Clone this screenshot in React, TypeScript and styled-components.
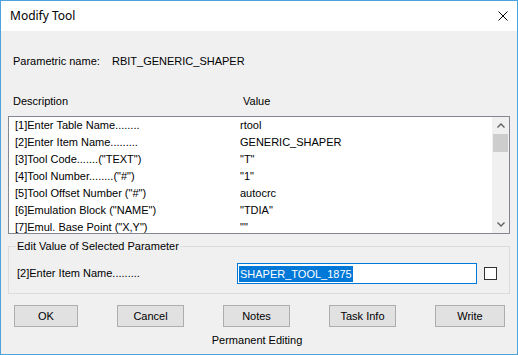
import React from "react";
import styled, { createGlobalStyle } from "styled-components";

const GlobalStyle = createGlobalStyle`
  html, body {
    margin: 0;
    padding: 0;
    background: #ffffff;
  }
`;

const parameters = [
  { name: "[1]Enter Table Name........", value: "rtool" },
  { name: "[2]Enter Item Name.........", value: "GENERIC_SHAPER" },
  { name: '[3]Tool Code.......("TEXT")', value: '"T"' },
  { name: '[4]Tool Number........("#")', value: '"1"' },
  { name: '[5]Tool Offset Number ("#")', value: "autocrc" },
  { name: '[6]Emulation Block ("NAME")', value: '"TDIA"' },
  { name: '[7]Emul. Base Point ("X,Y")', value: '""' },
];

const buttons = [
  { label: "OK", width: 64 },
  { label: "Cancel", width: 67 },
  { label: "Notes", width: 67 },
  { label: "Task Info", width: 67 },
  { label: "Write", width: 70 },
];

export default function App() {
  return (
    <>
      <GlobalStyle />
      <Window>
        <TitleBar>
          <Title>Modify Tool</Title>
          <CloseButton aria-label="Close">
            <svg width="10" height="10" viewBox="0 0 10 10">
              <path d="M0.5 0.5 L9.5 9.5 M9.5 0.5 L0.5 9.5" stroke="#000" strokeWidth="1" fill="none" />
            </svg>
          </CloseButton>
        </TitleBar>

        <Body>
          <ParamRow>
            <ParamLabel>Parametric name:</ParamLabel>
            <span>RBIT_GENERIC_SHAPER</span>
          </ParamRow>

          <ColumnHeader>
            <span>Description</span>
            <span>Value</span>
          </ColumnHeader>

          <ListBox>
            <Rows>
              {parameters.map((p) => (
                <Row key={p.name}>
                  <span>{p.name}</span>
                  <span>{p.value}</span>
                </Row>
              ))}
            </Rows>
            <ScrollBar>
              <ScrollArrow>
                <svg width="8" height="5" viewBox="0 0 8 5">
                  <path d="M0.5 4.5 L4 1 L7.5 4.5" stroke="#606060" strokeWidth="1.4" fill="none" />
                </svg>
              </ScrollArrow>
              <Thumb />
              <Track />
              <ScrollArrow>
                <svg width="8" height="5" viewBox="0 0 8 5">
                  <path d="M0.5 0.5 L4 4 L7.5 0.5" stroke="#606060" strokeWidth="1.4" fill="none" />
                </svg>
              </ScrollArrow>
            </ScrollBar>
          </ListBox>

          <GroupBox>
            <Legend>Edit Value of Selected Parameter</Legend>
            <EditRow>
              <EditLabel>[2]Enter Item Name.........</EditLabel>
              <TextInput>
                <Selection>SHAPER_TOOL_1875</Selection>
              </TextInput>
              <CheckBox />
            </EditRow>
          </GroupBox>

          <ButtonRow>
            {buttons.map((b) => (
              <Button key={b.label} $width={b.width}>
                {b.label}
              </Button>
            ))}
          </ButtonRow>

          <Status>Permanent Editing</Status>
        </Body>
      </Window>
    </>
  );
}

const Window = styled.div`
  width: 518px;
  height: 355px;
  box-sizing: border-box;
  border: 1px solid #4fa3dc;
  display: flex;
  flex-direction: column;
  font-family: "Liberation Sans", Arial, sans-serif;
  font-size: 11px;
  color: #000;
  overflow: hidden;
`;

const TitleBar = styled.div`
  height: 30px;
  flex-shrink: 0;
  background: #ffffff;
  display: flex;
  align-items: center;
  padding: 0 9px 0 9px;
`;

const Title = styled.div`
  font-family: "Noto Sans", "Open Sans", sans-serif;
  font-size: 12px;
  margin-top: -1px;
`;

const CloseButton = styled.div`
  margin-left: auto;
  width: 10px;
  height: 10px;
  display: flex;
  margin-top: -1px;
`;

const Body = styled.div`
  flex: 1;
  background: #f0f0f0;
  padding: 24px 7px 0 7px;
  display: flex;
  flex-direction: column;
`;

const ParamRow = styled.div`
  display: flex;
  line-height: 13px;
  padding-left: 5px;
`;

const ParamLabel = styled.span`
  width: 99px;
`;

const ColumnHeader = styled.div`
  display: grid;
  grid-template-columns: 230px 1fr;
  line-height: 13px;
  padding-left: 5px;
  margin-top: 27px;
`;

const ListBox = styled.div`
  margin-top: 8px;
  height: 118px;
  box-sizing: border-box;
  border: 1px solid #828790;
  background: #ffffff;
  display: flex;
`;

const Rows = styled.div`
  flex: 1;
  overflow: hidden;
  padding-left: 6px;
`;

const Row = styled.div`
  display: grid;
  grid-template-columns: 225px 1fr;
  line-height: 17px;
  white-space: nowrap;
`;

const ScrollBar = styled.div`
  width: 17px;
  background: #f0f0f0;
  display: flex;
  flex-direction: column;
`;

const ScrollArrow = styled.div`
  height: 17px;
  display: flex;
  align-items: center;
  justify-content: center;
`;

const Thumb = styled.div`
  height: 18px;
  margin: 0 1px;
  background: #cdcdcd;
`;

const Track = styled.div`
  flex: 1;
`;

const GroupBox = styled.fieldset`
  margin: 6px 0 0 0;
  padding: 0 8px 9px 8px;
  border: 1px solid #dcdcdc;
  min-inline-size: 0;
`;

const Legend = styled.legend`
  padding: 0 1px;
  margin-left: -1px;
  line-height: 13px;
`;

const EditRow = styled.div`
  display: flex;
  align-items: center;
  margin-top: 10px;
`;

const EditLabel = styled.span`
  width: 220px;
  line-height: 13px;
`;

const TextInput = styled.div`
  width: 240px;
  height: 21px;
  box-sizing: border-box;
  border: 1px solid #0078d7;
  background: #ffffff;
  padding: 0 1px;
  display: flex;
  align-items: center;
`;

const Selection = styled.span`
  background: #0078d7;
  color: #ffffff;
  line-height: 16px;
  padding: 0 1px;
`;

const CheckBox = styled.div`
  width: 13px;
  height: 13px;
  box-sizing: border-box;
  border: 1px solid #333333;
  background: #ffffff;
  margin-left: 7px;
`;

const ButtonRow = styled.div`
  display: flex;
  gap: 39px;
  padding-left: 6px;
  margin-top: 11px;
`;

const Button = styled.div<{ $width: number }>`
  width: ${(p) => p.$width}px;
  height: 22px;
  box-sizing: border-box;
  border: 1px solid #adadad;
  background: #e1e1e1;
  display: flex;
  align-items: center;
  justify-content: center;
  line-height: 13px;
`;

const Status = styled.div`
  margin-top: 7px;
  line-height: 13px;
  text-align: center;
  padding-right: 4px;
`;
